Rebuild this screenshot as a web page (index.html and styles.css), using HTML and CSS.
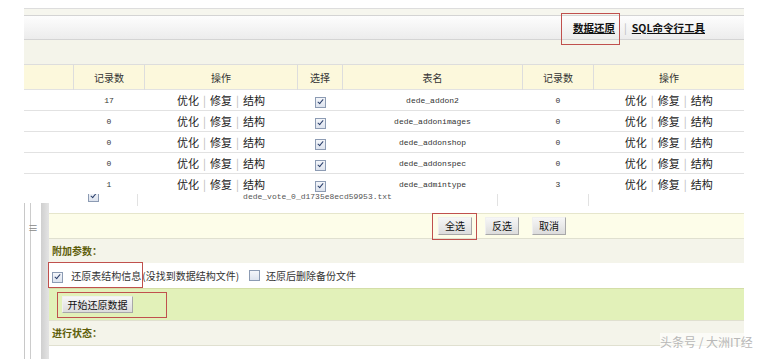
FILE: index.html
```html
<!DOCTYPE html>
<html lang="zh-CN">
<head>
  <meta charset="UTF-8" />
  <title>数据还原</title>
  <link rel="stylesheet" href="styles.css">
</head>
<body>
  <div class="top">
    <div class="strip"></div>
    <div class="toolbar">
      <a href="#" class="tab marked">数据还原</a>
      <span class="bar">|</span>
      <a href="#" class="tab">SQL命令行工具</a>
    </div>
    <div class="band"></div>

    <table class="list">
      <thead>
        <tr>
          <th class="c0"></th>
          <th class="c1">记录数</th>
          <th class="c2">操作</th>
          <th class="c3">选择</th>
          <th class="c4">表名</th>
          <th class="c5">记录数</th>
          <th class="c6">操作</th>
        </tr>
      </thead>
      <tbody id="rows"></tbody>
    </table>
  </div>

  <div class="lower">
    <div class="side"><span class="grip">&#8801;</span></div>
    <div class="main">
      <div class="cutrow">
        <div class="cutinner">
          <div class="cell w1"><span class="cb on"></span></div>
          <div class="cell w2">dede_vote_0_d1735e8ecd59953.txt</div>
          <div class="cell w3"></div>
          <div class="cell w4"></div>
        </div>
      </div>

      <div class="btnbar">
        <span class="marked mark-all"><button class="btn">全选</button></span>
        <button class="btn">反选</button>
        <button class="btn">取消</button>
      </div>

      <div class="title">附加参数：</div>

      <div class="options">
        <span class="marked mark-opt"><span class="cb on"></span> 还原表结构信息</span><span class="note">(没找到数据结构文件)</span>
        <span class="cb"></span> 还原后删除备份文件
      </div>

      <div class="go">
        <span class="marked mark-go"><button class="btn big">开始还原数据</button></span>
      </div>

      <div class="title">进行状态：</div>
    </div>
  </div>

  <div class="watermark">头条号 / 大洲IT经</div>

  <script>
    // table rows: left half shows the end of the previous table list
    const rows = [
      { left: 17, name: "dede_addon2", count: 0 },
      { left: 0, name: "dede_addonimages", count: 0 },
      { left: 0, name: "dede_addonshop", count: 0 },
      { left: 0, name: "dede_addonspec", count: 0 },
      { left: 1, name: "dede_admintype", count: 3 }
    ];
    const ops = '<a href="#">优化</a><span class="sep">|</span><a href="#">修复</a><span class="sep">|</span><a href="#">结构</a>';
    const body = document.getElementById("rows");
    rows.forEach(row => {
      const tr = document.createElement("tr");
      tr.innerHTML = `
        <td></td>
        <td class="num">${row.left}</td>
        <td class="ops">${ops}</td>
        <td><span class="cb on"></span></td>
        <td class="name">${row.name}</td>
        <td class="num">${row.count}</td>
        <td class="ops">${ops}</td>
      `;
      body.appendChild(tr);
    });
  </script>
</body>
</html>
```

FILE: styles.css
```css
body {
  margin: 0;
  background: #fff;
  font-family: "Noto Sans CJK SC", "Liberation Sans", sans-serif;
  color: #333;
  width: 775px;
  height: 359px;
  overflow: hidden;
  position: relative;
}
a {
  color: #222;
  text-decoration: none;
}
.marked {
  position: relative;
}
.marked::after {
  content: "";
  position: absolute;
  border: 1px solid #c0504d;
  pointer-events: none;
}

/* upper window */
.top {
  margin: 8px 0 0 24px;
  width: 720px;
}
.strip {
  height: 6px;
  border-top: 1px solid #ddd;
  background: #f6f6ee;
}
.toolbar {
  height: 23px;
  border-top: 1px solid #d4d4d4;
  border-bottom: 1px solid #d4d4d4;
  background: linear-gradient(#fdfdfd, #ececec);
  display: flex;
  justify-content: flex-end;
  align-items: center;
  padding-right: 39px;
  font-size: 10.5px;
}
.tab {
  display: inline-block;
  line-height: 14px;
  font-weight: bold;
  text-decoration: underline;
  color: #111;
}
.toolbar .marked::after {
  left: -12px;
  right: -5px;
  top: -8px;
  bottom: -10px;
}
.bar {
  color: #bbb;
  margin: 0 5px 0 9px;
}
.band {
  height: 24px;
  background: #f4f4ea;
}
.list {
  width: 720px;
  border-collapse: collapse;
  table-layout: fixed;
}
.list th {
  height: 24px;
  padding: 0;
  background: #fcf8dc;
  border-top: 1px solid #ddd;
  border-left: 1px solid #ddd;
  font-size: 10px;
  font-weight: normal;
  color: #333;
}
.list th.c0 { width: 49px; border-left: none; }
.list th.c1 { width: 70px; }
.list th.c2 { width: 152px; }
.list th.c3 { width: 44px; }
.list th.c4 { width: 179px; }
.list th.c5 { width: 70px; }
.list td {
  height: 20px;
  padding: 0;
  border-top: 1px solid #e2e2e2;
  text-align: center;
  font-size: 11px;
}
.list td.num,
.list td.name {
  font-family: "Liberation Mono", monospace;
  font-size: 8px;
  color: #333;
}
.sep {
  color: #bbb;
  margin: 0 4px;
}

/* checkbox */
.cb {
  display: inline-block;
  width: 9px;
  height: 9px;
  border: 1px solid #8c9bb3;
  background: linear-gradient(#f4f6fa, #dde3ee);
  vertical-align: middle;
  position: relative;
}
.cb.on::before {
  content: "";
  position: absolute;
  left: 3px;
  top: 0;
  width: 2px;
  height: 5px;
  border-right: 1.5px solid #2b3f6b;
  border-bottom: 1.5px solid #2b3f6b;
  transform: rotate(40deg);
}

/* lower window */
.lower {
  margin-left: 24px;
  width: 720px;
  height: 165px;
  display: flex;
}
.side {
  width: 24px;
  margin-top: 9px;
  border-left: 1px solid #c8c8c8;
  background: linear-gradient(90deg, #fff 5px, #ccc 5px, #ccc 6px, #fff 6px, #fff 16px, #cfcfcf 16px, #e4e4e4 24px);
  font-size: 10px;
  color: #888;
}
.grip {
  display: block;
  width: 16px;
  text-align: center;
  margin-top: 17px;
}
.main {
  flex: 1;
  font-size: 10px;
}
.cutrow {
  height: 19px;
  overflow: hidden;
}
.cutinner {
  display: flex;
  margin-top: -8px;
  height: 20px;
}
.cell {
  display: flex;
  align-items: center;
  justify-content: center;
  border-right: 1px solid #e2e2e2;
  font-family: "Liberation Mono", monospace;
  font-size: 8px;
  color: #555;
}
.w1 { width: 88px; }
.w2 { width: 359px; }
.w3 { width: 90px; }
.w4 { flex: 1; border-right: none; }
.btnbar {
  height: 24px;
  border-top: 1px solid #e6e6cc;
  background: #fdfde9;
  display: flex;
  align-items: center;
  padding-left: 389px;
  gap: 13px;
}
.btn {
  font-family: "Noto Sans CJK SC", sans-serif;
  font-size: 10px;
  color: #111;
  height: 18px;
  width: 34px;
  padding: 0;
  border: 1px solid;
  border-color: #f0f0f0 #a8a8a8 #a8a8a8 #f0f0f0;
  background: linear-gradient(#f6f6f6, #dcdcdc);
  line-height: 16px;
}
.mark-all::after {
  left: -6px;
  right: -5px;
  top: -4px;
  bottom: -5px;
}
.title {
  height: 24px;
  line-height: 24px;
  border-top: 1px solid #e0e0d0;
  background: #f4f4ea;
  padding-left: 3px;
  font-weight: bold;
  color: #5e5e0a;
}
.options {
  height: 25px;
  display: flex;
  align-items: center;
  padding-left: 3px;
  color: #333;
}
.options .cb {
  margin-right: 6px;
}
.mark-opt::after {
  left: -4px;
  right: -2px;
  top: -6px;
  bottom: -5px;
}
.note {
  margin: 0 10px 0 1px;
}
.go {
  height: 31px;
  border-top: 1px solid #d4dea8;
  background: #e2f1b9;
  display: flex;
  align-items: center;
  padding-left: 13px;
}
.btn.big {
  width: 71px;
  height: 17px;
  line-height: 15px;
}
.mark-go::after {
  left: -5px;
  right: -34px;
  top: -4px;
  bottom: -5px;
}
.main .title:last-child {
  border-bottom: 1px solid #e0e0d0;
}
.watermark {
  position: absolute;
  left: 660px;
  top: 333px;
  font-size: 12px;
  color: #b8b8b8;
  background: rgba(255, 255, 255, 0.6);
}
```
